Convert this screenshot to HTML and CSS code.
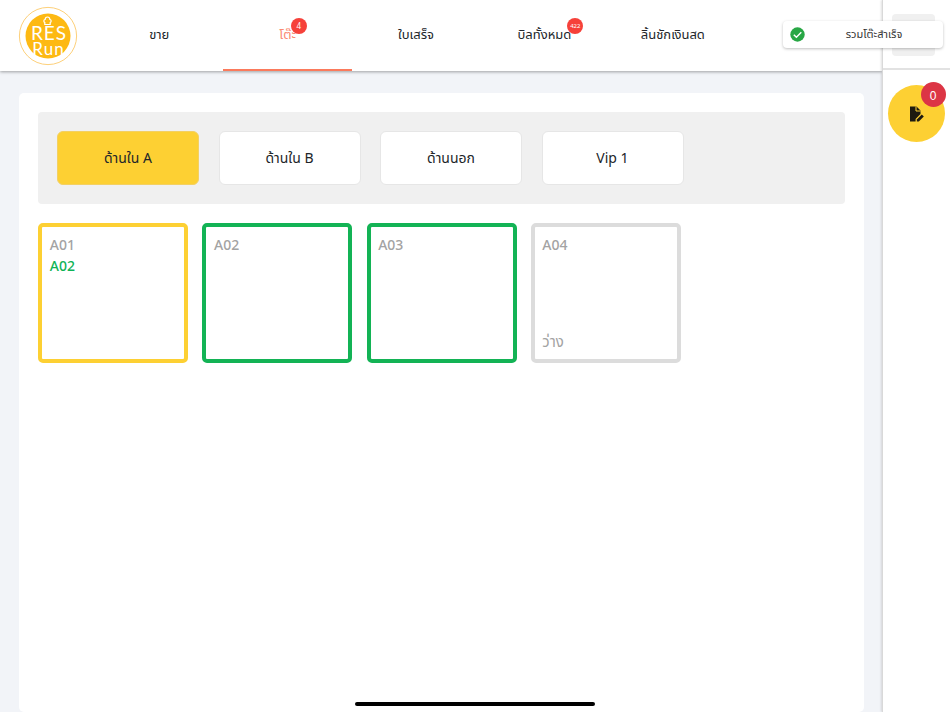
FILE: index.html
```html
<!DOCTYPE html>
<html lang="th">
<head>
<meta charset="utf-8">
<title>โต๊ะ</title>
<link rel="stylesheet" href="styles.css">
</head>
<body>
<div class="app">
  <div class="main">
    <header class="topbar">
      <div class="logo-wrap">
        <svg class="logo" width="60" height="60" viewBox="0 0 60 60">
          <circle cx="30" cy="30" r="28.6" fill="#fff" stroke="#fdd07a" stroke-width="1"/>
          <circle cx="30" cy="30" r="22.5" fill="#fdb913"/>
          <path d="M26.8 18.5h5.4v-2a1.7 1.7 0 0 0-.4-3.2 2.3 2.3 0 0 0-4.6 0 1.7 1.7 0 0 0-.4 3.2z" fill="none" stroke="#fff" stroke-width="1.2"/>
          <text class="logo-text" text-anchor="middle"><tspan class="logo-top" x="31" y="34">RES</tspan><tspan class="logo-bottom" x="30.5" y="49">Run</tspan></text>
        </svg>
      </div>
      <nav class="nav">
        <a class="nav-item"><span class="nav-label">ขาย</span></a>
        <a class="nav-item is-active"><span class="nav-label">โต๊ะ<span class="count count-one">4</span></span></a>
        <a class="nav-item"><span class="nav-label">ใบเสร็จ</span></a>
        <a class="nav-item"><span class="nav-label">บิลทั้งหมด<span class="count count-many">422</span></span></a>
        <a class="nav-item"><span class="nav-label">ลิ้นชักเงินสด</span></a>
      </nav>
    </header>
    <main class="content">
      <section class="card">
        <div class="zones">
          <button class="zone is-selected">ด้านใน A</button>
          <button class="zone">ด้านใน B</button>
          <button class="zone">ด้านนอก</button>
          <button class="zone">Vip 1</button>
        </div>
        <div class="tables">
          <div class="table table-yellow">
            <div class="table-name">A01</div>
            <div class="table-merged">A02</div>
          </div>
          <div class="table table-green">
            <div class="table-name">A02</div>
          </div>
          <div class="table table-green">
            <div class="table-name">A03</div>
          </div>
          <div class="table table-gray">
            <div class="table-name">A04</div>
            <div class="table-status">ว่าง</div>
          </div>
        </div>
      </section>
    </main>
  </div>
  <aside class="side">
    <div class="side-top"><div class="side-box"></div></div>
    <div class="side-body">
      <button class="fab">
        <svg width="18" height="18" viewBox="0 0 18 18">
          <path d="M3 1.5h6.5L13.5 5.5v3.6L8.6 14v2.5H3z" fill="#1d1a10"/>
          <path d="M9 1.5v4.5h4.5" fill="none" stroke="#fdd033" stroke-width="1"/>
          <path d="M9.8 16.6v-2l5-5 2 2-5 5z" fill="#1d1a10"/>
        </svg>
        <span class="fab-badge">0</span>
      </button>
    </div>
  </aside>
</div>
<div class="toast">
  <svg width="15" height="15" viewBox="0 0 15 15">
    <circle cx="7.5" cy="7.5" r="7.2" fill="#28a745"/>
    <path d="M3.8 7.7l2.6 2.6 4.9-5" fill="none" stroke="#fff" stroke-width="1.4"/>
  </svg>
  <span class="toast-text">รวมโต๊ะสำเร็จ</span>
</div>
<div class="home-bar"></div>
</body>
</html>
```
FILE: styles.css
```css
* { box-sizing: border-box; }
html, body { margin: 0; height: 100%; overflow: hidden; }
body {
  font-family: "Noto Sans", "Noto Sans Thai", "Open Sans", "DejaVu Sans", sans-serif;
  color: #212529;
  background: #fff;
}
.app { display: flex; width: 950px; height: 712px; }
.main { width: 882px; display: flex; flex-direction: column; }
.topbar {
  height: 71px;
  display: flex;
  background: #fff;
  box-shadow: 0 1px 3px rgba(0,0,0,.35);
  position: relative;
}
.logo-wrap { width: 95px; padding: 6px 0 0 18px; }
.logo { display: block; }
.logo-text {
  font-family: "Lato", sans-serif;
  font-weight: 400;
  fill: #fff;
}
.logo-top { font-size: 19px; letter-spacing: 1px; }
.logo-bottom { font-size: 17px; letter-spacing: 1px; }
.nav { display: flex; width: 642px; }
.nav-item {
  flex: 1;
  display: flex;
  align-items: center;
  justify-content: center;
  padding: 0 0 1px;
  font-size: 13px;
  color: #212529;
}
.nav-item.is-active { color: #fb8a72; border-bottom: 2px solid #fb7a5c; padding-bottom: 0; }
.nav-label { position: relative; white-space: nowrap; }
.count {
  position: absolute;
  width: 16px;
  height: 16px;
  top: -7px;
  right: -12px;
  border-radius: 50%;
  background: #f6413a;
  color: #fff;
  text-align: center;
  font-size: 8px;
  line-height: 16px;
}
.count-one { right: -11px; }
.count-many { right: -12px; font-size: 6px; }
.content {
  flex: 1;
  min-height: 0;
  background: #f2f4f8;
  padding: 22px 18px 0 19px;
}
.card {
  height: 100%;
  background: #fff;
  border-radius: 5px;
  padding: 19px 19px 0;
}
.zones {
  height: 92px;
  background: #f0f0f0;
  border-radius: 4px;
  padding: 19px;
  display: flex;
  gap: 19.5px;
}
.zone {
  width: 142px;
  height: 54px;
  background: #fff;
  border: 1px solid #e6e6e6;
  border-radius: 6px;
  font: inherit;
  font-size: 14px;
  line-height: 20px;
  padding: 0 0 1px;
  color: #212529;
}
.zone.is-selected { background: #fdd033; border-color: #f3d063; }
.tables { display: flex; gap: 14.2px; margin: 19px 0 0 .3px; }
.table {
  width: 150px;
  height: 140px;
  border: 4px solid #ddd;
  border-radius: 5px;
  padding: 7px 8px 7px 7.5px;
  display: flex;
  flex-direction: column;
  font-size: 14px;
  line-height: 21px;
  font-weight: 500;
}
.table-yellow { border-color: #fdd033; }
.table-green { border-color: #13b355; }
.table-gray { border-color: #dcdcdc; }
.table-name { color: #a3a3a3; }
.table-merged { color: #0fb356; }
.table-status { margin-top: auto; color: #a3a3a3; font-size: 15px; font-weight: 400; }
.side {
  width: 68px;
  background: #fff;
  border-left: 1px solid #d9d9d9;
  box-shadow: -1px 0 2px rgba(0,0,0,.12);
  position: relative;
}
.side-top {
  height: 70px;
  padding: 14px 0 0 9px;
  border-bottom: 2px solid #e2e2e2;
}
.side-box { width: 43px; height: 42px; background: #f0f0f0; border-radius: 4px; }
.side-body { padding: 15px 0 0 4.5px; }
.fab {
  width: 57px;
  height: 57px;
  border: 0;
  border-radius: 50%;
  background: #fdd033;
  display: flex;
  align-items: center;
  justify-content: center;
  padding: 0;
  position: relative;
}
.fab-badge {
  position: absolute;
  top: -3px;
  right: -1px;
  width: 25px;
  height: 25px;
  border-radius: 50%;
  background: #dc3545;
  color: #fff;
  font-size: 12px;
  line-height: 28px;
  text-align: center;
}
.toast {
  position: absolute;
  left: 783px;
  top: 21px;
  width: 160px;
  height: 27px;
  background: #fff;
  border-radius: 4px;
  box-shadow: 0 1px 3px rgba(0,0,0,.25);
  display: flex;
  align-items: center;
  padding-left: 7px;
}
.toast-text { flex: 1; text-align: center; font-size: 11px; color: #333; }
.home-bar {
  position: absolute;
  left: 355px;
  top: 702px;
  width: 240px;
  height: 4px;
  border-radius: 2px;
  background: #000;
}
```
